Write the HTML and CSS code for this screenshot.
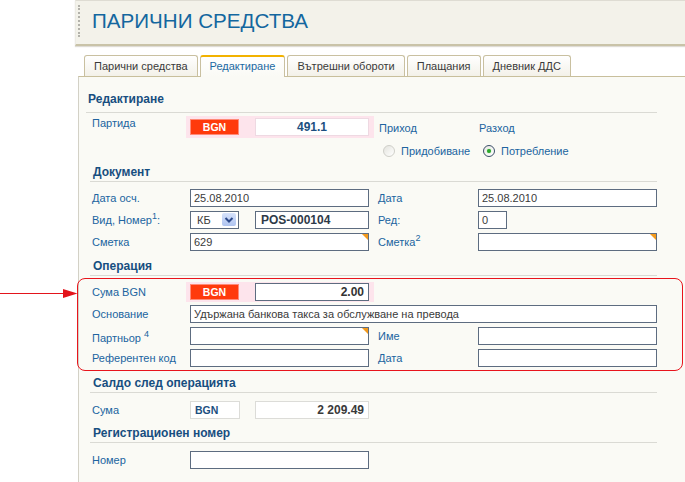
FILE: index.html
```html
<!DOCTYPE html>
<html lang="bg">
<head>
<meta charset="utf-8">
<title>Парични средства</title>
<link rel="stylesheet" href="styles.css">
</head>
<body>
<div class="page">
  <header class="header">
    <span class="grip"></span>
    <h1 class="title">ПАРИЧНИ СРЕДСТВА</h1>
  </header>
  <nav class="tabs">
    <span class="tab">Парични средства</span>
    <span class="tab active">Редактиране</span>
    <span class="tab">Вътрешни обороти</span>
    <span class="tab">Плащания</span>
    <span class="tab">Дневник ДДС</span>
  </nav>
  <main class="panel">
    <h2 class="sec sec-first">Редактиране</h2>
    <div class="row-party">
      <span class="lbl lbl-party">Партида</span>
      <div class="pink pink-tall">
        <span class="cur">BGN</span>
        <span class="f f-num ro center">491.1</span>
      </div>
      <div class="kind">
        <span class="kind-h">Приход</span>
        <span class="kind-h">Разход</span>
        <span class="opt"><span class="radio"></span>Придобиване</span>
        <span class="opt"><span class="radio on"></span>Потребление</span>
      </div>
    </div>

    <h2 class="sec">Документ</h2>
    <div class="rows rows-doc">
      <div class="row">
        <span class="lbl">Дата осч.</span>
        <span class="f">25.08.2010</span>
        <span class="rl">Дата</span>
        <span class="f">25.08.2010</span>
      </div>
      <div class="row">
        <span class="lbl">Вид, Номер<sup>1</sup>:</span>
        <span class="combo">
          <span class="sel">КБ<span class="drop"><svg width="14" height="12" viewBox="0 0 14 12"><path d="M3.5 4 L7 7.5 L10.5 4" fill="none" stroke="#2d4a8c" stroke-width="2"/></svg></span></span>
          <span class="f f-short bold">POS-000104</span>
        </span>
        <span class="rl">Ред:</span>
        <span class="f f-tiny">0</span>
      </div>
      <div class="row">
        <span class="lbl">Сметка</span>
        <span class="f tri">629</span>
        <span class="rl">Сметка<sup>2</sup></span>
        <span class="f tri"></span>
      </div>
    </div>

    <h2 class="sec sec-op">Операция</h2>
    <div class="redbox">
      <div class="row">
        <span class="lbl">Сума BGN</span>
        <div class="pink">
          <span class="cur">BGN</span>
          <span class="f f-num right">2.00</span>
        </div>
      </div>
      <div class="row">
        <span class="lbl">Основание</span>
        <span class="f f-wide">Удържана банкова такса за обслужване на превода</span>
      </div>
      <div class="row">
        <span class="lbl lbl-low">Партньор <sup>4</sup></span>
        <span class="f tri"></span>
        <span class="rl">Име</span>
        <span class="f"></span>
      </div>
      <div class="row">
        <span class="lbl">Референтен код</span>
        <span class="f"></span>
        <span class="rl">Дата</span>
        <span class="f"></span>
      </div>
    </div>

    <h2 class="sec sec-after">Салдо след операцията</h2>
    <div class="rows rows-gap">
      <div class="row">
        <span class="lbl">Сума</span>
        <span class="combo">
          <span class="curbox">BGN</span>
          <span class="f f-short f-num ro-gray right">2 209.49</span>
        </span>
      </div>
    </div>

    <h2 class="sec sec-after">Регистрационен номер</h2>
    <div class="rows rows-gap">
      <div class="row">
        <span class="lbl">Номер</span>
        <span class="f"></span>
      </div>
    </div>
  </main>
</div>
<svg class="arrow" width="78" height="11" viewBox="0 0 78 11"><line x1="0" y1="5.5" x2="65" y2="5.5" stroke="#e3141b" stroke-width="1"/><polygon points="63,1 77.5,5.5 63,10" fill="#e3141b"/></svg>
</body>
</html>
```

FILE: styles.css
```css
* { box-sizing: border-box; }
html, body { margin: 0; padding: 0; background: #fff; }
body {
  width: 685px;
  height: 482px;
  overflow: hidden;
  position: relative;
  font-family: "Liberation Sans", Arial, sans-serif;
  font-size: 11px;
  color: #333;
}
.page { display: flex; flex-direction: column; height: 482px; }

.header {
  margin-left: 75px;
  height: 46px;
  flex: none;
  background: #f3f2ea;
  border-top: 1px solid #dedcd3;
  border-left: 1px solid #ecebe4;
  border-bottom: 2px solid #c9c3a8;
  box-shadow: 0 1px 1px #dedcd6;
  display: flex;
  align-items: flex-start;
  padding-left: 2px;
}
.grip {
  width: 2px;
  height: 32px;
  margin-top: 4px;
  border-left: 2px dotted #b3b2ab;
}
.title {
  margin: 8px 0 0 12px;
  font-size: 20.6px;
  line-height: 24px;
  font-weight: normal;
  color: #13679f;
}

.tabs {
  flex: none;
  display: flex;
  gap: 2px;
  margin: 9px 0 0 84px;
  height: 21px;
  position: relative;
  z-index: 1;
}
.tab {
  height: 21px;
  padding: 1px 9px 0;
  line-height: 19px;
  border: 1px solid #c9c0a0;
  border-bottom: none;
  border-radius: 3px 3px 0 0;
  background: linear-gradient(#ffffff, #f3f1e9);
  color: #3a3a3a;
  white-space: nowrap;
}
.tab.active {
  height: 22px;
  margin-bottom: -1px;
  border-top: 2px solid #f2b200;
  padding-top: 0;
  color: #1b69a3;
  background: linear-gradient(#ffffff, #fafaf5);
}

.panel {
  flex: 1;
  margin-left: 78px;
  background: #fafaf5;
  border-top: 1px solid #c8bf9c;
  border-left: 1px solid #d3d1c6;
}

.sec {
  margin: 0 0 0 11px;
  width: 567px;
  padding: 0 0 1px 3px;
  font-size: 12px;
  line-height: 16px;
  font-weight: bold;
  color: #174e80;
  border-bottom: 1px solid #dadad4;
}
.sec-first {
  margin: 14px 0 0 7px;
  width: 571px;
  padding: 0 0 5px 2px;
}
.sec-op { margin-top: 5px; }
.sec-after { margin-top: 4px; }

.lbl {
  width: 98px;
  flex: none;
  color: #2064a0;
  white-space: nowrap;
}
.lbl sup, .rl sup { font-size: 9px; line-height: 0; vertical-align: 5px; }
.lbl-low { padding-top: 4px; }
.rl {
  width: 100px;
  flex: none;
  margin-left: 9px;
  color: #2064a0;
}

.row-party {
  display: flex;
  align-items: flex-start;
  height: 51px;
  padding: 3px 0 0 13px;
}
.lbl-party { line-height: 16px; margin-top: -1px; }

.kind {
  margin-left: 4px;
  margin-top: 4px;
  display: grid;
  grid-template-columns: 100px 100px;
  row-gap: 6px;
  color: #2064a0;
}
.kind-h { line-height: 16px; padding-left: 1px; }
.opt { display: flex; align-items: center; height: 18px; }
.radio {
  width: 12px;
  height: 12px;
  margin: 0 6px 0 5px;
  border-radius: 50%;
  border: 1px solid #cfcfc9;
  background: linear-gradient(135deg, #e4e4de, #ffffff);
  display: flex;
  align-items: center;
  justify-content: center;
}
.radio.on {
  border-color: #3b4f68;
  background: linear-gradient(135deg, #e9e9e4, #ffffff);
}
.radio.on::after {
  content: "";
  width: 4px;
  height: 4px;
  border-radius: 50%;
  background: #2ba62b;
  box-shadow: 0 0 1px #6cd46c;
}

.rows-doc { margin-top: 5px; }
.rows-gap { margin-top: 6px; }
.row {
  display: flex;
  align-items: center;
  height: 22px;
  padding-left: 13px;
}

.f {
  position: relative;
  width: 179px;
  height: 18px;
  flex: none;
  border: 1px solid #5d6c80;
  background: #fff;
  padding: 0 3px;
  line-height: 16px;
  color: #3a3a3a;
  white-space: nowrap;
  overflow: hidden;
}
.f-wide { width: 467px; }
.f-short { width: 114px; }
.f-tiny { width: 29px; }
.f-num { font-size: 12px; font-weight: bold; }
.bold { font-size: 12px; font-weight: bold; color: #2e3a48; padding-left: 5px; }
.center { text-align: center; }
.right { text-align: right; }
.ro { border-color: #eed9e2; color: #1b4f80; width: 114px; }
.ro-gray { border-color: #dcdcd8; color: #3a3a3a; padding-right: 4px; }
.tri::after {
  content: "";
  position: absolute;
  top: 0;
  right: 0;
  border-style: solid;
  border-width: 0 6px 6px 0;
  border-color: transparent #f39a1c transparent transparent;
}

.pink {
  margin-left: -4px;
  width: 188px;
  height: 20px;
  flex: none;
  display: flex;
  align-items: center;
  padding-left: 4px;
  background: #fde4ec;
}
.pink-tall { height: 22px; }
.pink .f { width: 114px; }
.pink .right { padding-right: 4px; color: #333; }
.cur {
  width: 49px;
  height: 16px;
  flex: none;
  margin-right: 16px;
  background: #ff3a0c;
  border: 1px solid #ff8a78;
  color: #fff;
  font-size: 10.5px;
  font-weight: bold;
  display: flex;
  align-items: center;
  justify-content: center;
}

.combo { display: flex; width: 179px; flex: none; justify-content: space-between; align-items: center; }
.sel {
  width: 49px;
  height: 18px;
  border: 1px solid #5d6c80;
  background: #fff;
  padding-left: 6px;
  line-height: 16px;
  color: #3a3a3a;
  display: flex;
  justify-content: space-between;
}
.drop {
  width: 14px;
  height: 13px;
  margin: 1px 2px 0 0;
  border-radius: 2px;
  background: linear-gradient(#d6e2fb, #afc4f0);
  display: flex;
  align-items: center;
  justify-content: center;
}
.curbox {
  width: 50px;
  height: 18px;
  border: 1px solid #dcdcd8;
  background: #fff;
  padding-left: 4px;
  line-height: 16px;
  font-size: 10.5px;
  font-weight: bold;
  color: #1b4f80;
}

.redbox {
  margin: 2px 0 0 -2px;
  width: 606px;
  padding: 2px 0 1px;
  border: 1px solid #e8141c;
  border-radius: 8px;
}
.redbox .row { padding-left: 14px; }

.arrow {
  position: absolute;
  left: 0;
  top: 288px;
}
```
